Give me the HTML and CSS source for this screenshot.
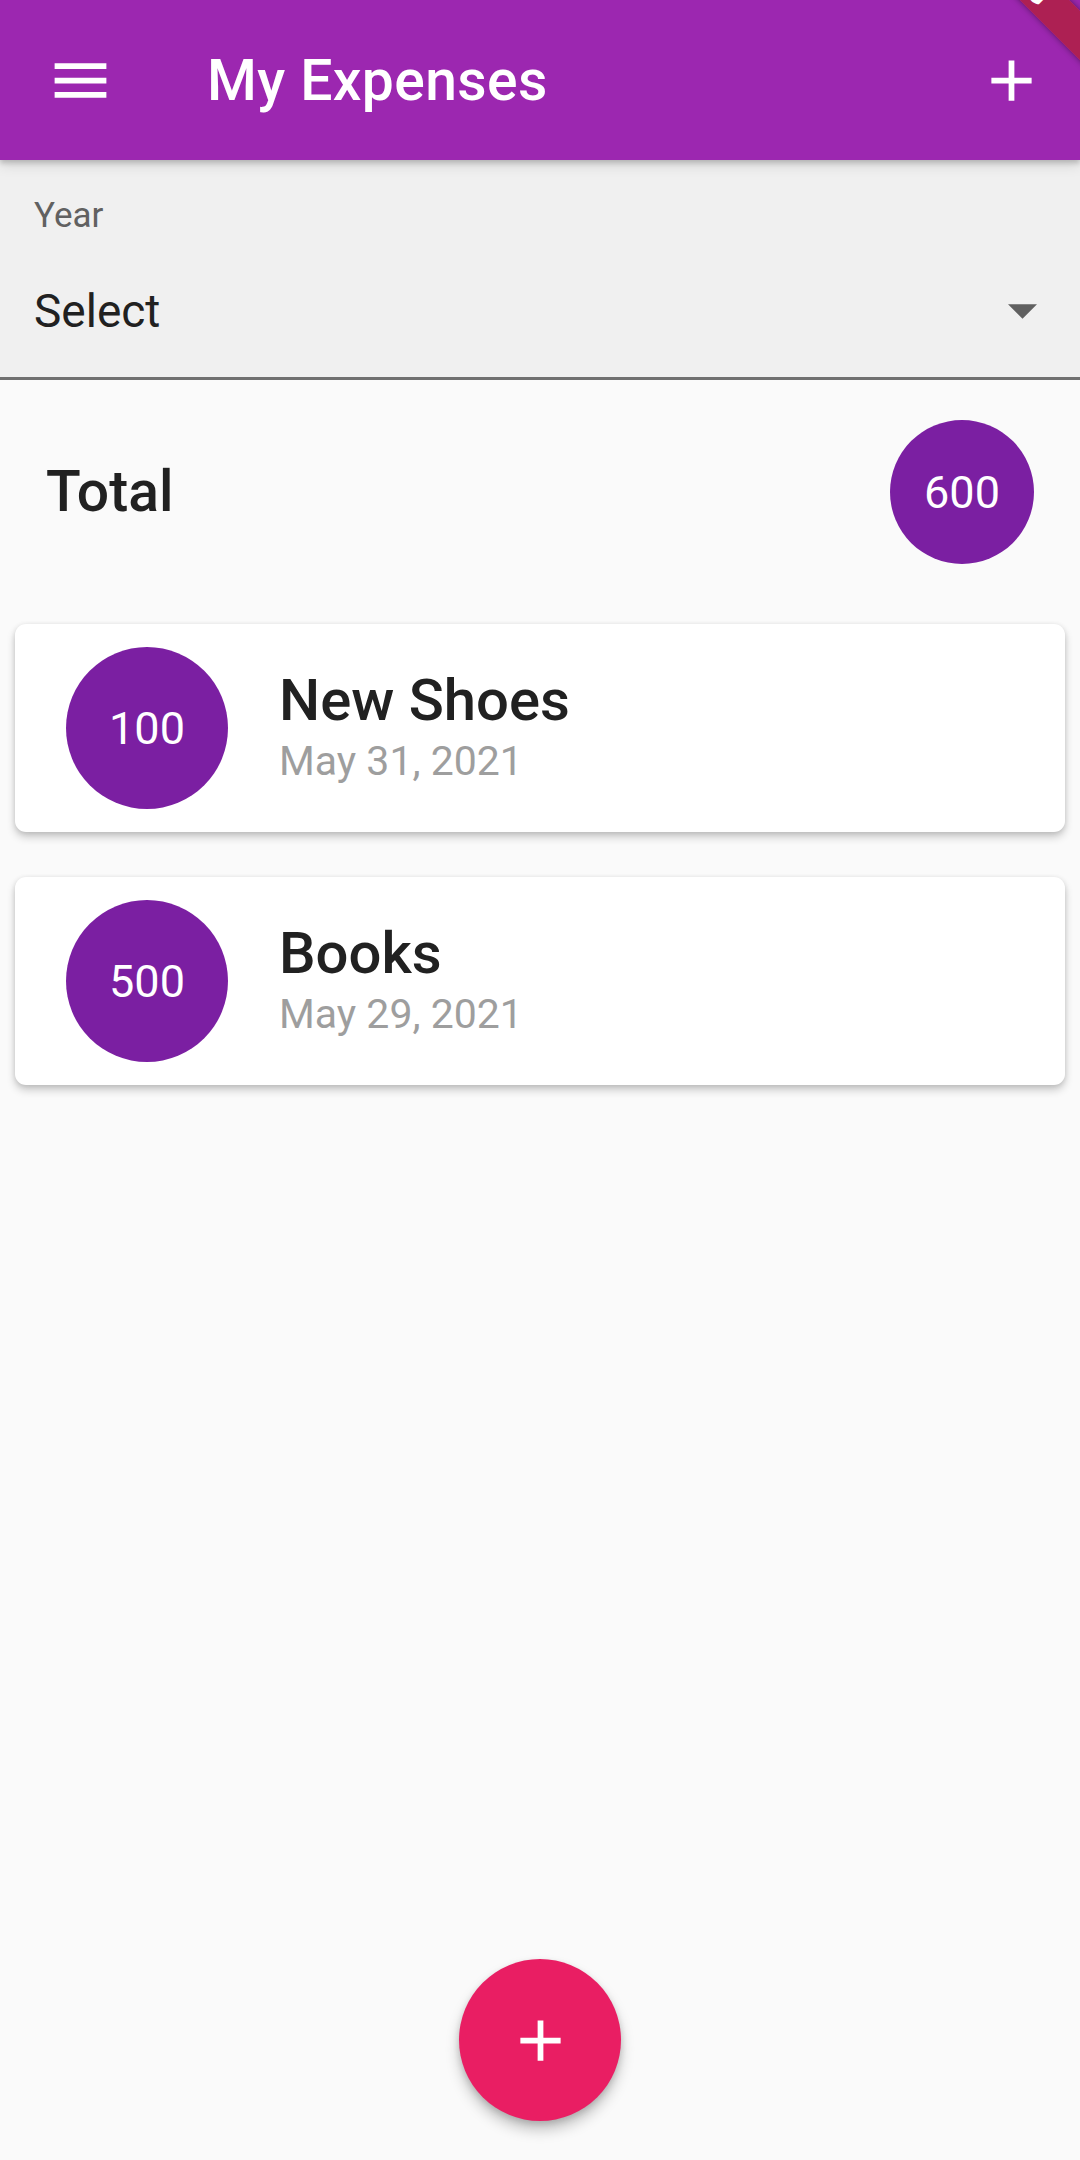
FILE: index.html
```html
<!DOCTYPE html>
<html lang="en">
<head>
<meta charset="utf-8">
<title>My Expenses</title>
<link rel="stylesheet" href="styles.css">
</head>
<body>
<div class="screen">
  <header class="appbar">
    <button class="icon-btn leading" aria-label="Menu">
      <svg class="icon" viewBox="0 0 24 24"><path d="M3 18h18v-2H3v2zm0-5h18v-2H3v2zm0-7v2h18V6H3z"/></svg>
    </button>
    <h1 class="title">My Expenses</h1>
    <button class="icon-btn trailing" aria-label="Add">
      <svg class="icon" viewBox="0 0 24 24"><path d="M19 13h-6v6h-2v-6H5v-2h6V5h2v6h6v2z"/></svg>
    </button>
  </header>
  <div class="debug-banner"><span>DEBUG</span></div>

  <main class="content">
    <div class="dropdown">
      <div class="dd-text">
        <div class="dd-label">Year</div>
        <div class="dd-value">Select</div>
      </div>
      <svg class="dd-arrow" viewBox="7 10 10 5"><path d="M7 10l5 5 5-5z"/></svg>
    </div>

    <section class="total-row">
      <span class="total-label">Total</span>
      <div class="amount amount-total">600</div>
    </section>

    <ul class="expense-list">
      <li class="card">
        <div class="amount">100</div>
        <div class="card-text">
          <div class="card-title">New Shoes</div>
          <div class="card-date">May 31, 2021</div>
        </div>
      </li>
      <li class="card">
        <div class="amount">500</div>
        <div class="card-text">
          <div class="card-title">Books</div>
          <div class="card-date">May 29, 2021</div>
        </div>
      </li>
    </ul>
  </main>

  <button class="fab" aria-label="Add expense">
    <svg class="icon" viewBox="0 0 24 24"><path d="M19 13h-6v6h-2v-6H5v-2h6V5h2v6h6v2z"/></svg>
  </button>
</div>
</body>
</html>
```

FILE: styles.css
```css
html, body {
  margin: 0;
  padding: 0;
  width: 1080px;
  height: 2160px;
  overflow: hidden;
  background: #fafafa;
  font-family: Roboto, "Noto Sans", "Liberation Sans", sans-serif;
}

.screen {
  position: relative;
  width: 1080px;
  height: 2160px;
  overflow: hidden;
  background: #fafafa;
}

button {
  border: 0;
  padding: 0;
  margin: 0;
  background: none;
  font: inherit;
  cursor: pointer;
}

/* App bar */
.appbar {
  position: relative;
  z-index: 2;
  height: 160px;
  background: #9c27b0;
  display: flex;
  align-items: center;
  box-shadow: 0 3px 5px rgba(0, 0, 0, 0.18), 0 6px 12px rgba(0, 0, 0, 0.10);
}

.icon-btn {
  height: 160px;
  display: flex;
  align-items: center;
  justify-content: center;
}

.icon-btn .icon {
  width: 69px;
  height: 69px;
  fill: #ffffff;
}

.leading {
  width: 160px;
}

.trailing {
  width: 138px;
  margin-left: auto;
}

.title {
  margin: 0 0 0 47px;
  padding-top: 2px;
  color: #ffffff;
  font-size: 57px;
  font-weight: 500;
  line-height: 66px;
  letter-spacing: 0.4px;
}

/* Debug banner (overlay in corner) */
.debug-banner {
  position: absolute;
  z-index: 5;
  left: 862px;
  top: -50px;
  width: 300px;
  height: 35px;
  transform: rotate(45deg);
  background: rgba(183, 28, 28, 0.63);
  box-shadow: 0 0 6px rgba(0, 0, 0, 0.45);
  display: flex;
  align-items: center;
  justify-content: center;
}

.debug-banner span {
  color: #ffffff;
  font-size: 29px;
  font-weight: 900;
  line-height: 35px;
}

/* Dropdown */
.dropdown {
  box-sizing: border-box;
  height: 220px;
  background: #f0f0f0;
  border-bottom: 3px solid #707070;
  display: flex;
  align-items: flex-start;
}

.dd-text {
  flex: 1;
  padding: 36px 0 0 34px;
}

.dd-label {
  font-size: 35px;
  line-height: 40px;
  color: #616161;
}

.dd-value {
  margin-top: 48px;
  font-size: 46px;
  line-height: 54px;
  color: #212121;
}

.dd-arrow {
  width: 29px;
  height: 15px;
  margin: 144px 43px 0 0;
  fill: #606060;
}

/* Total row */
.total-row {
  display: flex;
  align-items: center;
  justify-content: space-between;
  padding: 40px 46px 0 46px;
}

.total-label {
  font-size: 57px;
  font-weight: 500;
  color: #212121;
  line-height: 66px;
}

.amount {
  flex: none;
  width: 162px;
  height: 162px;
  border-radius: 50%;
  background: #7b1fa2;
  color: #ffffff;
  font-size: 45px;
  display: flex;
  align-items: center;
  justify-content: center;
}

.amount-total {
  width: 144px;
  height: 144px;
}

/* Expense list */
.expense-list {
  list-style: none;
  margin: 60px 15px 0;
  padding: 0;
  display: flex;
  flex-direction: column;
  gap: 45px;
}

.card {
  display: flex;
  align-items: center;
  height: 208px;
  box-sizing: border-box;
  padding: 0 0 0 51px;
  background: #ffffff;
  border-radius: 11px;
  box-shadow: 0 5px 8px rgba(0, 0, 0, 0.20), 0 1px 5px rgba(0, 0, 0, 0.10);
}

.card-text {
  margin-left: 51px;
}

.card-title {
  font-size: 58px;
  font-weight: 500;
  line-height: 66px;
  color: #212121;
}

.card-date {
  font-size: 41px;
  line-height: 56px;
  color: #9e9e9e;
}

/* Floating action button */
.fab {
  position: absolute;
  left: 459px;
  top: 1959px;
  width: 162px;
  height: 162px;
  border-radius: 50%;
  background: #e91e63;
  display: flex;
  align-items: center;
  justify-content: center;
  box-shadow: 0 9px 14px rgba(0, 0, 0, 0.22), 0 3px 6px rgba(0, 0, 0, 0.14);
}

.fab .icon {
  width: 69px;
  height: 69px;
  fill: #ffffff;
}
```
